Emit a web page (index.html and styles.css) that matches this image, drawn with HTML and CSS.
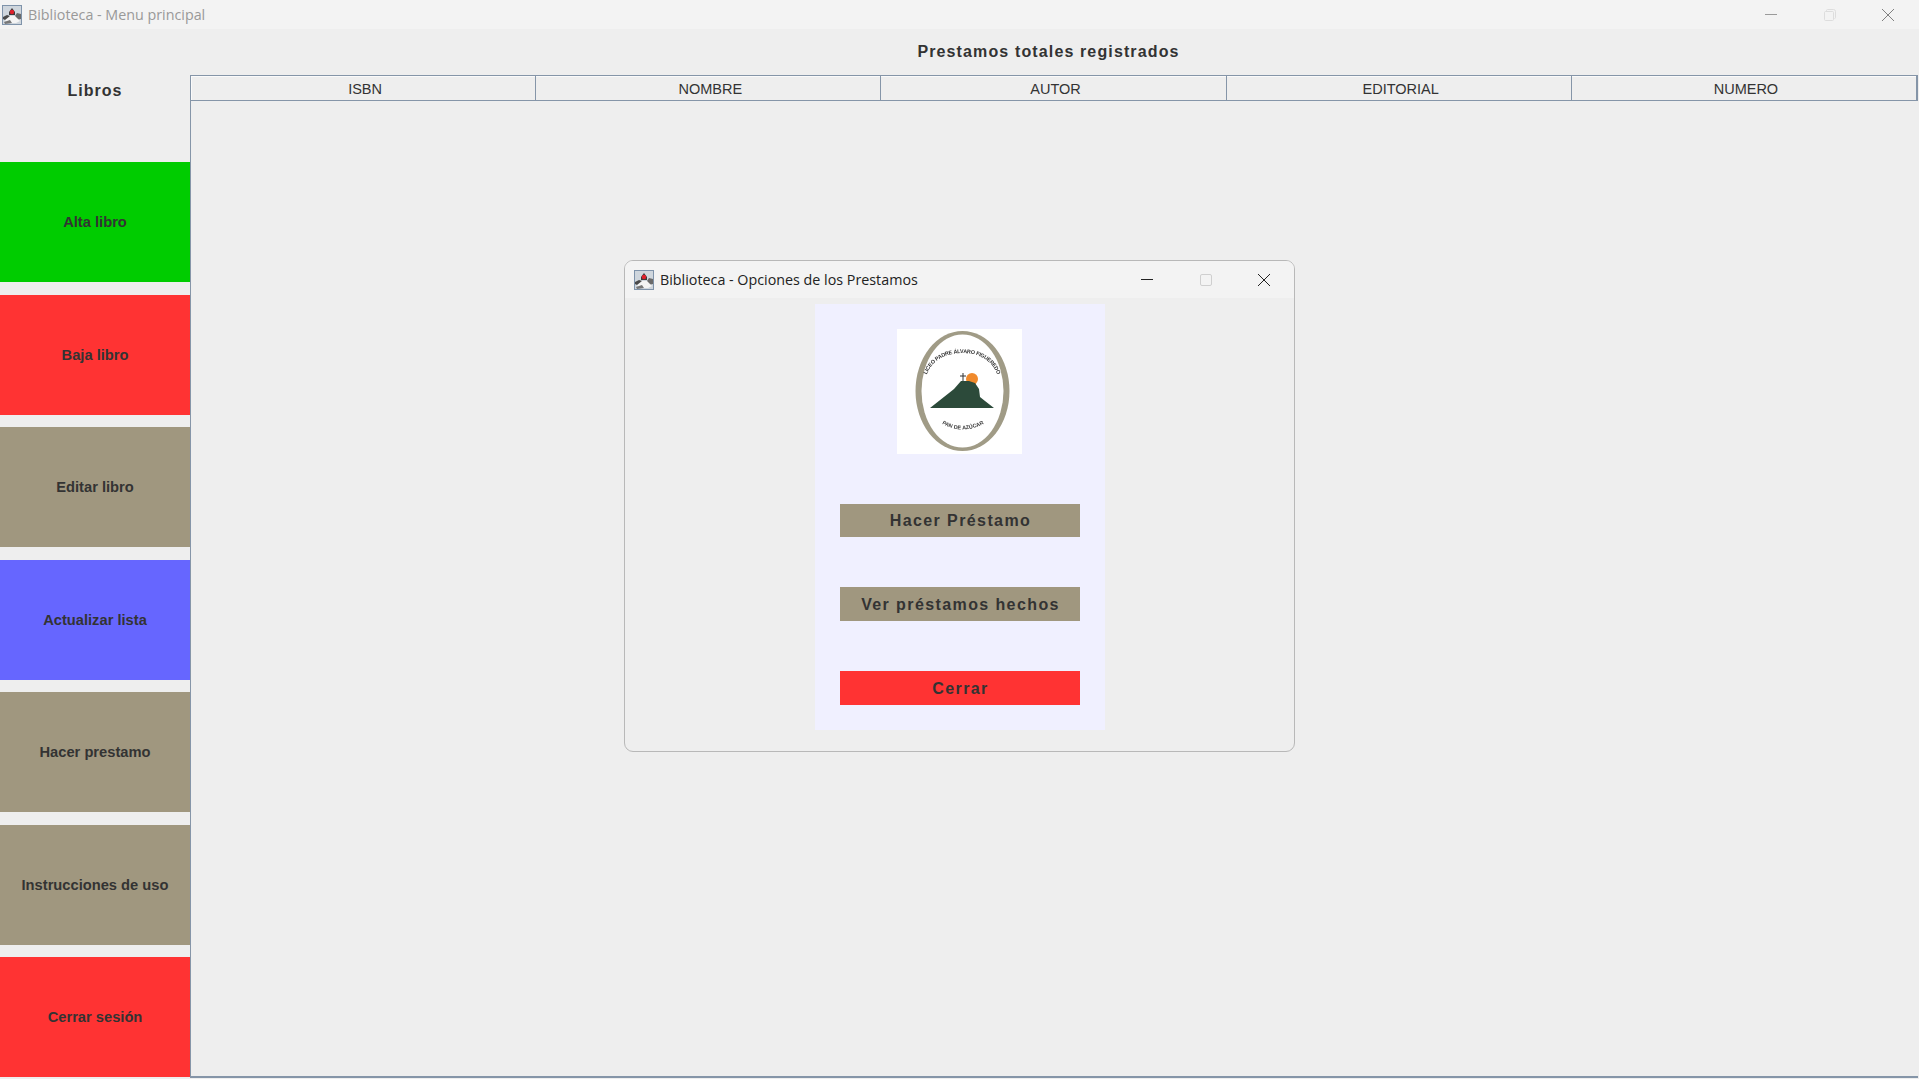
FILE: index.html
```html
<!DOCTYPE html>
<html lang="en">
<head>
  <meta charset="UTF-8">
  <meta name="viewport" content="width=device-width, initial-scale=1.0">
  <title>Biblioteca - Menu principal</title>
  <link rel="stylesheet" href="styles.css">
</head>
<body>
  <svg class="defs" width="0" height="0">
    <symbol id="app-icon" viewBox="0 0 20 20">
      <rect width="20" height="20" fill="#7f93aa"/>
      <rect x="1" y="1" width="18" height="18" fill="#cfd6dd"/>
      <path d="M1 12 L5 10 L8 11 L7 15 L3 15 L1 14 Z" fill="#4a4a4a"/>
      <path d="M19 9 L15 8 L13 11 L14 15 L19 14 Z" fill="#6a6a6a"/>
      <path d="M7 7 L10 3 L13 7 L13 10 L7 10 Z" fill="#3c3c3c"/>
      <path d="M3 15 L8 11 L13 11 L18 16 L14 18 L5 18 Z" fill="#f4f4f4"/>
      <path d="M2 17 L8 15 L10 18 L3 19 Z" fill="#777"/>
      <circle cx="10" cy="7" r="2.2" fill="#e0202c"/>
    </symbol>
  </svg>

  <div class="titlebar main-titlebar">
    <div class="title">
      <svg class="app-icon"><use href="#app-icon"/></svg>
      <span>Biblioteca - Menu principal</span>
    </div>
    <div class="window-controls">
      <svg width="12" height="12" viewBox="0 0 12 12"><path d="M0 5.5 H12" stroke="#9a9a9a" fill="none"/></svg>
      <svg width="12" height="12" viewBox="0 0 12 12"><path d="M2.5 2.5 V1.5 Q2.5 .5 3.5 .5 H9.5 Q11.5 .5 11.5 2.5 V8.5 Q11.5 9.5 10.5 9.5 M1.5 2.5 H8.5 Q9.5 2.5 9.5 3.5 V10.5 Q9.5 11.5 8.5 11.5 H1.5 Q.5 11.5 .5 10.5 V3.5 Q.5 2.5 1.5 2.5 Z" stroke="#dddddd" fill="none"/></svg>
      <svg width="12" height="12" viewBox="0 0 12 12"><path d="M0 0 L12 12 M12 0 L0 12" stroke="#808080" fill="none"/></svg>
    </div>
  </div>

  <div class="main">
    <div class="sidebar">
      <div class="sidebar-title">Libros</div>
      <button class="side-btn green">Alta libro</button>
      <button class="side-btn red">Baja libro</button>
      <button class="side-btn tan">Editar libro</button>
      <button class="side-btn blue">Actualizar lista</button>
      <button class="side-btn tan">Hacer prestamo</button>
      <button class="side-btn tan">Instrucciones de uso</button>
      <button class="side-btn red">Cerrar sesión</button>
    </div>

    <div class="content">
      <h2 class="content-title">Prestamos totales registrados</h2>
      <div class="table">
        <div class="table-head">
          <div class="col">ISBN</div>
          <div class="col">NOMBRE</div>
          <div class="col">AUTOR</div>
          <div class="col">EDITORIAL</div>
          <div class="col">NUMERO</div>
        </div>
      </div>
    </div>
  </div>

  <!-- dialog window on top of the main one -->
  <div class="dialog">
    <div class="titlebar dialog-titlebar">
      <div class="title">
        <svg class="app-icon"><use href="#app-icon"/></svg>
        <span>Biblioteca - Opciones de los Prestamos</span>
      </div>
      <div class="window-controls">
        <svg width="12" height="12" viewBox="0 0 12 12"><path d="M0 5.5 H12" stroke="#222" fill="none"/></svg>
        <svg width="12" height="12" viewBox="0 0 12 12"><rect x=".5" y=".5" width="11" height="11" rx="1.5" stroke="#cfcfcf" fill="none"/></svg>
        <svg width="12" height="12" viewBox="0 0 12 12"><path d="M0 0 L12 12 M12 0 L0 12" stroke="#222" fill="none"/></svg>
      </div>
    </div>
    <div class="dialog-body">
      <div class="panel">
        <div class="logo">
          <svg width="125" height="125" viewBox="0 0 125 125">
            <defs>
              <path id="logo-top" d="M28 53 C31 33 47 24 65 24 C84 24 99 33 102 53"/>
              <path id="logo-bottom" d="M42 93 Q65 108 90 93"/>
            </defs>
            <ellipse cx="65.5" cy="62" rx="47" ry="60" fill="#a09b86"/>
            <ellipse cx="65.5" cy="62" rx="41" ry="56.5" fill="#ffffff"/>
            <circle cx="75" cy="50" r="6" fill="#f08a2c"/>
            <path d="M33 79 L52 64 L57 60 L64 52 L72 52 L78 54 L82 60 L83 68 L88 72 L97 79 Z" fill="#2c4a3a"/>
            <path d="M66 44 V52 M63 47 H69" stroke="#333" fill="none"/>
            <text class="logo-text logo-text-top"><textPath href="#logo-top" startOffset="50%" text-anchor="middle">LICEO PADRE ÁLVARO FIGUEREDO</textPath></text>
            <text class="logo-text"><textPath href="#logo-bottom" startOffset="50%" text-anchor="middle">PAN DE AZÚCAR</textPath></text>
          </svg>
        </div>
        <button class="dlg-btn tan">Hacer Préstamo</button>
        <button class="dlg-btn tan">Ver préstamos hechos</button>
        <button class="dlg-btn red">Cerrar</button>
      </div>
    </div>
  </div>
</body>
</html>
```

FILE: styles.css
```css
* {
  box-sizing: border-box;
}

body {
  margin: 0;
  width: 1919px;
  height: 1079px;
  overflow: hidden;
  position: relative;
  font-family: "Liberation Sans", Arial, sans-serif;
  background-color: #eeeeee;
  color: #333333;
}

.defs {
  position: absolute;
}

.titlebar {
  display: flex;
  justify-content: space-between;
  align-items: center;
  background-color: #f3f3f3;
}

.title {
  display: flex;
  align-items: center;
  font-family: "Open Sans", "Noto Sans", sans-serif;
  font-size: 14.3px;
}

.app-icon {
  width: 20px;
  height: 20px;
}

.window-controls {
  display: flex;
  align-items: center;
  gap: 46.5px;
}

.main-titlebar {
  height: 29px;
  padding-left: 2px;
  color: #999999;
}

.main-titlebar .title span {
  margin-left: 6px;
}

.main-titlebar .window-controls {
  margin-right: 25px;
}

.main {
  display: flex;
  height: 1050px;
}

.sidebar {
  width: 190px;
  flex-shrink: 0;
  display: grid;
  grid-template-rows: 120.5px repeat(7, 120px);
  row-gap: 12.5px;
}

.sidebar-title {
  padding-top: 53px;
  text-align: center;
  font-size: 16px;
  font-weight: bold;
  letter-spacing: 1px;
}

.side-btn {
  border: none;
  padding: 0;
  font-family: inherit;
  font-size: 14.7px;
  font-weight: bold;
  color: #333333;
}

.green { background-color: #00cc00; }
.red { background-color: #ff3333; }
.tan { background-color: #a0977f; }
.blue { background-color: #6666ff; }

.content {
  flex: 1;
  display: flex;
  flex-direction: column;
}

.content-title {
  margin: 0;
  height: 46px;
  padding-top: 14px;
  padding-right: 12px;
  text-align: center;
  font-size: 16px;
  letter-spacing: 1.13px;
}

.table {
  height: 1003px;
  margin-right: 1px;
  border-left: 1px solid #8595a8;
  border-bottom: 2px solid #8595a8;
}

.table-head {
  display: flex;
  height: 26px;
  border-top: 1px solid #8595a8;
  border-bottom: 1px solid #8595a8;
  box-shadow: inset 1px 1px 0 #fafafa;
}

.col {
  flex: 1;
  padding-left: 4px;
  line-height: 26px;
  text-align: center;
  font-size: 14.5px;
  border-right: 1px solid #8595a8;
}

.col:last-child {
  border-right-width: 2px;
}

.dialog {
  position: absolute;
  left: 624px;
  top: 260px;
  width: 671px;
  height: 492px;
  display: flex;
  flex-direction: column;
  background-color: #eeeeee;
  border: 1px solid #b8b8b8;
  border-radius: 9px;
}

.dialog-titlebar {
  height: 37px;
  padding-left: 9px;
  flex-shrink: 0;
  color: #222222;
  border-radius: 8px 8px 0 0;
}

.dialog-titlebar .title span {
  margin-left: 6px;
}

.dialog-titlebar .window-controls {
  margin-right: 24px;
}

.dialog-body {
  flex: 1;
  display: flex;
  justify-content: center;
  padding-top: 6px;
}

.panel {
  width: 290px;
  height: 426px;
  display: flex;
  flex-direction: column;
  align-items: center;
  background-color: #f0f0ff;
  padding-top: 25px;
}

.logo {
  width: 125px;
  height: 125px;
  background-color: #ffffff;
}

.logo svg {
  filter: blur(0.5px);
}

.logo-text {
  font-size: 5.4px;
  font-weight: bold;
  fill: #333333;
}

.logo-text-top {
  letter-spacing: -0.2px;
}

.dlg-btn {
  width: 240px;
  height: 34px;
  margin-top: 50px;
  border: none;
  padding: 2px 0 0 2px;
  font-family: inherit;
  font-size: 16px;
  font-weight: bold;
  letter-spacing: 1.4px;
  color: #333333;
}

.logo + .dlg-btn {
  height: 33px;
  padding-top: 0;
}
```
